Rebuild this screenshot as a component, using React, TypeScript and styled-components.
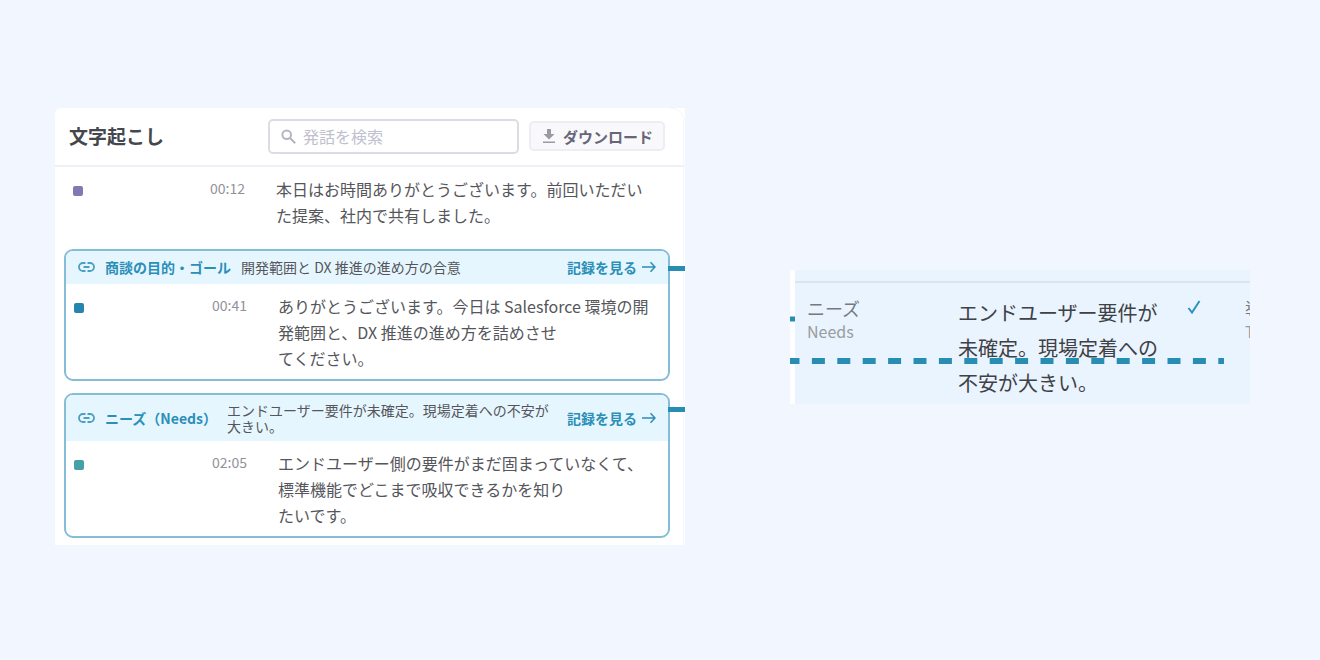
import React from "react";
import styled, { createGlobalStyle } from "styled-components";

const GlobalStyle = createGlobalStyle`
  *, *::before, *::after { box-sizing: border-box; }
  body {
    margin: 0;
    background: #f1f6ff;
    color: #55565b;
    font-family: "Noto Sans CJK JP", sans-serif;
    font-size: 16px;
  }
  button, input { font: inherit; color: inherit; }
`;

const Page = styled.main`
  min-height: 100vh;
  display: grid;
  grid-template-columns: minmax(0, 63fr) minmax(0, 46fr);
  column-gap: 105px;
  align-items: center;
  padding: 0 70px 8px 55px;
`;

const Panel = styled.section`
  position: relative;
  background: #fff;
  border-radius: 6px 0 0 0;
  padding-bottom: 7px;
  &::after {
    content: "";
    position: absolute;
    inset: 0 1px 0 auto;
    width: 14px;
    border-top: 1px solid #f5f7fc;
    border-right: 1px solid #f5f7fc;
    border-top-right-radius: 12px;
    pointer-events: none;
  }
`;

const Header = styled.header`
  display: flex;
  align-items: center;
  gap: 10px;
  padding: 11px 20px 11px 14px;
  border-bottom: 2px solid #f0f0f7;
`;

const Title = styled.h1`
  flex: 1;
  margin: 0;
  font-size: 19px;
  line-height: 26px;
  font-weight: 700;
  color: #44474d;
`;

const Search = styled.label`
  display: flex;
  align-items: center;
  gap: 7px;
  width: 251px;
  height: 35px;
  padding: 0 11px;
  border: 2px solid #dcdce4;
  border-radius: 5px;
  color: #b5b5c0;
`;

const SearchInput = styled.input`
  flex: 1;
  min-width: 0;
  padding: 0;
  border: 0;
  outline: 0;
  background: none;
  color: #44474d;
  &::placeholder { color: #c0c0ce; opacity: 1; }
`;

const Download = styled.button`
  display: flex;
  align-items: center;
  gap: 8px;
  height: 30px;
  padding: 0 10px 0 12px;
  border: 2px solid #ededf3;
  border-radius: 5px;
  background: #f9f9fc;
  color: #686579;
  font-size: 15px;
  font-weight: 700;
`;

const Utterance = styled.div<{ $inset?: boolean }>`
  display: grid;
  grid-template-columns: 10px 1fr 383px;
  padding: ${(p) => (p.$inset ? "9px 7px 8px 8px" : "9px 26px 21px 18px")};
`;

const Speaker = styled.span<{ $color: string }>`
  width: 10px;
  height: 10px;
  margin-top: 10px;
  border-radius: 2px;
  background: ${(p) => p.$color};
`;

const Time = styled.time`
  padding-right: 31px;
  text-align: right;
  font-size: 14px;
  line-height: 24px;
  color: #91929c;
`;

const Speech = styled.p`
  margin: 0;
  line-height: 26px;
`;

const Linked = styled.article`
  position: relative;
  z-index: 1;
  margin: 0 15px 12px 9px;
  border: 2px solid #85bdd6;
  border-radius: 9px;
  &:last-child { margin-bottom: 0; }
`;

const LinkedHeader = styled.div`
  display: flex;
  align-items: center;
  gap: 10px;
  min-height: 33px;
  padding: 7px 12px;
  border-radius: 7px 7px 0 0;
  background: #e6f6ff;
  font-size: 14px;
  line-height: 16px;
`;

const Tag = styled.strong`
  flex: none;
  color: #2b8fb8;
`;

const Summary = styled.span`
  flex: 1;
`;

const RecordLink = styled.a`
  display: flex;
  flex: none;
  align-items: center;
  gap: 4px;
  color: #2b8fb8;
  font-weight: 700;
  text-decoration: none;
`;

const Connector = styled.i<{ $top: number }>`
  position: absolute;
  top: ${(p) => p.$top}px;
  left: 100%;
  width: 17px;
  height: 5px;
  background: #288db3;
`;

const RecordFrame = styled.div`
  position: relative;
  margin-top: 22px;
`;

const Record = styled.section`
  overflow: hidden;
  border-left: 5px solid #fff;
  background: #eaf4ff;
`;

const RecordTop = styled.div`
  height: 13px;
  border-bottom: 2px solid #dde3ea;
`;

const RecordRow = styled.div`
  display: grid;
  grid-template-columns: 151px 204px 1fr 5px;
  padding: 12px 0 4px 12px;
`;

const Label = styled.div`
  font-size: 18px;
  line-height: 26px;
  color: #77797d;
  white-space: nowrap;
  overflow: hidden;
`;

const SubLabel = styled.div`
  font-size: 16px;
  line-height: 20px;
  color: #999ca0;
`;

const Value = styled.p`
  margin: 0;
  font-size: 20px;
  line-height: 35px;
  color: #3e4145;
`;

const Check = styled.svg`
  margin: 4px 0 0 25px;
`;

const DashLine = styled.svg`
  position: absolute;
  left: 0;
  top: 0;
  width: 100%;
  height: 100%;
  pointer-events: none;
`;

const LinkIcon = () => (
  <svg width="17" height="12" viewBox="0 0 17 12" fill="none" stroke="#4b9fc0" strokeWidth="1.8" aria-hidden="true">
    <path d="M7.500 2H5a4 4 0 0 0 0 8h2.500M9.500 2H12a4 4 0 0 1 0 8H9.500M5.500 6h6" />
  </svg>
);

const ArrowIcon = () => (
  <svg width="15" height="12" viewBox="0 0 15 12" fill="none" stroke="currentColor" strokeWidth="1.6" aria-hidden="true">
    <path d="M1 6h13M9.500 1.300 14 6l-4.500 4.700" />
  </svg>
);

const SearchIcon = () => (
  <svg width="15" height="15" viewBox="0 0 15 15" fill="none" stroke="currentColor" strokeWidth="2" aria-hidden="true">
    <circle cx="5.700" cy="5.700" r="4.300" />
    <path d="m9 9 5.200 5.200" />
  </svg>
);

const DownloadIcon = () => (
  <svg width="12" height="15" viewBox="0 0 12 15" fill="#9a9aa5" aria-hidden="true">
    <path d="M4 0h4v5h3.500L6 10.500.5 5H4zM0 12.500h12V14H0z" />
  </svg>
);

type LinkedItem = {
  tag: string;
  summary: React.ReactNode;
  time: string;
  color: string;
  connectorTop: number;
  speech: React.ReactNode;
};

const linkedItems: LinkedItem[] = [
  {
    tag: "商談の目的・ゴール",
    summary: "開発範囲と DX 推進の進め方の合意",
    time: "00:41",
    color: "#2585ac",
    connectorTop: 15,
    speech: (
      <>
        ありがとうございます。今日は Salesforce 環境の開
        <br />
        発範囲と、DX 推進の進め方を詰めさせ
        <br />
        てください。
      </>
    ),
  },
  {
    tag: "ニーズ（Needs）",
    summary: (
      <>
        エンドユーザー要件が未確定。現場定着への不安が
        <br />
        大きい。
      </>
    ),
    time: "02:05",
    color: "#45a0a7",
    connectorTop: 12,
    speech: (
      <>
        エンドユーザー側の要件がまだ固まっていなくて、
        <br />
        標準機能でどこまで吸収できるかを知り
        <br />
        たいです。
      </>
    ),
  },
];

export default function App() {
  return (
    <>
      <GlobalStyle />
      <Page>
        <Panel>
          <Header>
            <Title>文字起こし</Title>
            <Search>
              <SearchIcon />
              <SearchInput type="search" placeholder="発話を検索" aria-label="発話を検索" />
            </Search>
            <Download type="button">
              <DownloadIcon />
              ダウンロード
            </Download>
          </Header>
          <Utterance>
            <Speaker $color="#8578b2" />
            <Time>00:12</Time>
            <Speech>
              本日はお時間ありがとうございます。前回いただい
              <br />
              た提案、社内で共有しました。
            </Speech>
          </Utterance>
          {linkedItems.map((item) => (
            <Linked key={item.time}>
              <LinkedHeader>
                <LinkIcon />
                <Tag>{item.tag}</Tag>
                <Summary>{item.summary}</Summary>
                <RecordLink href="#record">
                  記録を見る
                  <ArrowIcon />
                </RecordLink>
              </LinkedHeader>
              <Utterance $inset>
                <Speaker $color={item.color} />
                <Time>{item.time}</Time>
                <Speech>{item.speech}</Speech>
              </Utterance>
              <Connector $top={item.connectorTop} />
            </Linked>
          ))}
        </Panel>
        <RecordFrame id="record">
          <Record>
            <RecordTop />
            <RecordRow>
              <Label>
                ニーズ
                <SubLabel>Needs</SubLabel>
              </Label>
              <Value>
                エンドユーザー要件が
                <br />
                未確定。現場定着への
                <br />
                不安が大きい。
              </Value>
              <Check width="14" height="16" viewBox="0 0 14 16" fill="none" stroke="#2b93bd" strokeWidth="2" role="img" aria-label="確認済み">
                <path d="m1.500 9 3.500 4.500L12.500 2" />
              </Check>
              <Label>
                導入時期
                <SubLabel>Timeline</SubLabel>
              </Label>
            </RecordRow>
          </Record>
          <DashLine aria-hidden="true">
            <path d="M0 49h5" stroke="#288db3" strokeWidth="5" />
            <path d="M0 91h434" stroke="#288db3" strokeWidth="6" strokeDasharray="13 12.400" strokeDashoffset="3.500" />
          </DashLine>
        </RecordFrame>
      </Page>
    </>
  );
}
